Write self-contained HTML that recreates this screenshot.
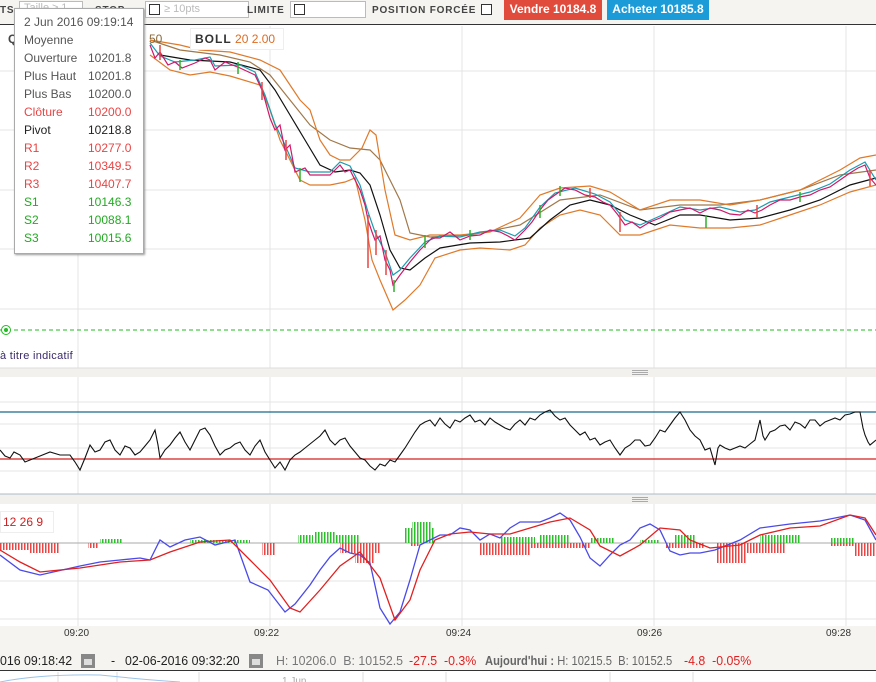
<!DOCTYPE html>
<html><head><meta charset="utf-8"><style>
*{margin:0;padding:0;box-sizing:border-box}
body{width:876px;height:682px;overflow:hidden;background:#fff;font-family:"Liberation Sans",sans-serif;position:relative}
.a{position:absolute;white-space:nowrap}
.tb{position:absolute;left:0;top:0;width:876px;height:25px;background:#f5f4f0;border-bottom:1px solid #333}
.lbl{font-size:10px;font-weight:bold;letter-spacing:.8px;color:#444;top:5px}
.inp{position:absolute;height:17px;top:1px;border:1px solid #bbb;background:#fff;font-size:11px;color:#bbb}
.cb{position:absolute;width:11px;height:11px;border:1px solid #333;background:#fff}
.tt{position:absolute;left:14px;top:8px;width:130px;height:246px;background:#fff;border:1px solid #aaa;box-shadow:1px 1px 2px #999;font-size:12px}
.tt div{position:absolute;left:9px;white-space:nowrap}
.tt span{position:absolute;left:64px}
.st{font-size:13px;top:653px;transform:scaleX(.95);transform-origin:0 0}
</style></head><body>
<div class="tb"></div>
<div class="a lbl" style="left:0">TS</div>
<div class="inp" style="left:19px;width:64px;padding-left:4px">Taille ≥ 1</div>
<div class="a lbl" style="left:95px">STOP</div>
<div class="inp" style="left:145px;width:104px;padding-left:18px;line-height:15px">≥ 10pts</div>
<div class="cb" style="left:149px;top:4px"></div>
<div class="a lbl" style="left:247px">LIMITE</div>
<div class="inp" style="left:290px;width:76px"></div>
<div class="cb" style="left:294px;top:4px"></div>
<div class="a lbl" style="left:372px">POSITION FORCÉE</div>
<div class="cb" style="left:481px;top:4px"></div>
<div class="a" style="left:504px;top:0;width:98px;height:20px;background:#e04b3c;color:#fff;font-size:12px;font-weight:bold;text-align:center;line-height:19px">Vendre 10184.8</div>
<div class="a" style="left:607px;top:0;width:102px;height:20px;background:#1b9bd8;color:#fff;font-size:12px;font-weight:bold;text-align:center;line-height:19px">Acheter 10185.8</div>

<svg class="a" style="left:0;top:26px" width="876" height="600" viewBox="0 26 876 600">
<defs>
<pattern id="pr" width="3" height="10" patternUnits="userSpaceOnUse"><rect width="1.5" height="10" fill="#e84545"/></pattern>
<pattern id="pg" width="3" height="10" patternUnits="userSpaceOnUse"><rect width="1.5" height="10" fill="#2cc02c"/></pattern>
</defs>
<g stroke="#e4e4e4" stroke-width="1">
<line x1="78" y1="26" x2="78" y2="626"/><line x1="270" y1="26" x2="270" y2="626"/><line x1="462" y1="26" x2="462" y2="626"/><line x1="654" y1="26" x2="654" y2="626"/><line x1="846" y1="26" x2="846" y2="626"/>
<line x1="0" y1="71" x2="876" y2="71"/><line x1="0" y1="130" x2="876" y2="130"/><line x1="0" y1="190" x2="876" y2="190"/><line x1="0" y1="249" x2="876" y2="249"/><line x1="0" y1="309" x2="876" y2="309"/>
<line x1="0" y1="402" x2="876" y2="402"/><line x1="0" y1="424" x2="876" y2="424"/><line x1="0" y1="448" x2="876" y2="448"/><line x1="0" y1="471" x2="876" y2="471"/>
<line x1="0" y1="581" x2="876" y2="581"/><line x1="0" y1="619" x2="876" y2="619"/>
</g>
<rect x="0" y="368" width="876" height="9" fill="#f2f1ee"/><line x1="0" y1="368" x2="876" y2="368" stroke="#ddd"/>
<rect x="0" y="494" width="876" height="10" fill="#f2f1ee"/><line x1="0" y1="494" x2="876" y2="494" stroke="#a9bccb"/>
<g stroke="#999" stroke-width=".8"><line x1="632" y1="370.5" x2="648" y2="370.5"/><line x1="632" y1="372.5" x2="648" y2="372.5"/><line x1="632" y1="374.5" x2="648" y2="374.5"/>
<line x1="632" y1="497.5" x2="648" y2="497.5"/><line x1="632" y1="499.5" x2="648" y2="499.5"/><line x1="632" y1="501.5" x2="648" y2="501.5"/></g>
<g fill="none" stroke-width="1.2">
<polyline stroke="#a0784a" points="150,40 180,50 220,55 250,62 270,75 290,100 310,125 330,140 350,148 370,150 380,160 390,180 400,200 410,233 430,237 470,235 520,225 560,200 600,195 640,210 680,205 720,205 760,200 800,190 840,175 876,170"/>
<polyline stroke="#e07a2a" points="150,40 180,45 200,50 230,52 260,60 280,70 290,85 300,100 310,110 320,140 330,155 340,160 350,160 362,148 370,130 376,135 385,190 395,235 410,240 430,235 460,235 490,232 520,218 540,195 560,188 590,186 610,192 640,210 670,200 700,200 730,205 760,200 800,190 840,170 860,158 876,155"/>
<polyline stroke="#e07a2a" points="150,55 170,70 190,75 210,72 230,76 260,85 270,110 280,140 290,160 300,180 310,185 330,185 345,182 355,178 365,220 372,260 380,280 393,310 405,300 420,285 435,258 460,250 480,248 510,250 525,245 540,228 560,215 580,210 600,215 620,235 640,235 670,225 700,228 730,228 760,225 790,215 820,205 850,192 876,185"/>
<polyline stroke="#111" points="160,55 190,60 230,62 260,70 275,90 290,115 305,140 320,165 335,172 350,170 360,173 370,185 380,215 390,250 400,268 410,270 425,258 440,248 470,243 500,242 530,238 550,220 570,205 590,200 610,205 630,215 655,225 680,215 700,215 730,220 760,218 790,210 820,200 850,185 876,178"/>
<polyline stroke="#1b9bb0" points="150,43 160,56 175,62 195,60 210,57 215,66 240,65 255,72 265,95 275,124 285,145 295,168 310,172 330,172 340,162 350,166 360,185 368,212 375,232 385,252 393,275 400,270 410,258 425,242 440,236 460,237 480,232 500,230 515,236 525,228 540,207 555,193 575,188 595,194 610,202 625,220 640,225 660,216 680,207 700,210 720,207 740,212 755,210 770,202 790,197 810,192 830,184 850,170 865,162 876,180"/>
<polyline stroke="#d0186a" points="150,45 155,58 160,52 168,65 175,62 182,68 195,63 205,58 210,60 215,70 225,62 240,68 255,75 262,90 265,100 270,118 275,130 280,125 285,150 290,145 295,172 305,168 310,175 330,175 340,165 345,172 350,170 360,190 365,205 368,220 372,232 375,240 380,236 385,260 390,270 393,285 400,275 410,262 420,250 425,245 432,238 440,238 450,232 460,240 470,236 480,235 490,230 500,232 508,236 515,240 525,230 532,222 540,210 548,200 555,195 565,188 575,190 585,195 595,197 603,202 610,205 618,215 625,225 632,222 640,228 650,222 660,218 670,212 680,210 690,208 700,213 710,208 720,210 730,214 740,215 748,210 755,213 762,210 770,205 780,200 790,200 800,197 810,195 820,190 830,187 840,180 850,173 858,168 865,165 870,178 876,185"/>
</g>
<g stroke-width="1.5"><g stroke="#e84545"><line x1="160" y1="45" x2="160" y2="60"/><line x1="262" y1="82" x2="262" y2="100"/><line x1="286" y1="140" x2="286" y2="160"/><line x1="368" y1="215" x2="368" y2="268"/><line x1="376" y1="230" x2="376" y2="255"/><line x1="386" y1="250" x2="386" y2="275"/><line x1="620" y1="212" x2="620" y2="232"/><line x1="757" y1="205" x2="757" y2="218"/><line x1="870" y1="170" x2="870" y2="186"/><line x1="590" y1="188" x2="590" y2="198"/></g>
<g stroke="#2cb02c"><line x1="180" y1="60" x2="180" y2="70"/><line x1="238" y1="62" x2="238" y2="74"/><line x1="300" y1="168" x2="300" y2="182"/><line x1="394" y1="280" x2="394" y2="292"/><line x1="425" y1="235" x2="425" y2="248"/><line x1="470" y1="230" x2="470" y2="240"/><line x1="540" y1="205" x2="540" y2="218"/><line x1="560" y1="186" x2="560" y2="196"/><line x1="706" y1="215" x2="706" y2="228"/><line x1="800" y1="192" x2="800" y2="202"/></g></g>
<line x1="0" y1="330" x2="876" y2="330" stroke="#22bb22" stroke-dasharray="4,3"/>
<circle cx="6" cy="330" r="4.5" fill="#fff" stroke="#22bb22"/><circle cx="6" cy="330" r="2" fill="#22bb22"/>
<line x1="0" y1="412" x2="876" y2="412" stroke="#1a6a8a" stroke-width="1.3"/>
<line x1="0" y1="459" x2="876" y2="459" stroke="#d42020" stroke-width="1.3"/>
<polyline fill="none" stroke="#111" stroke-width="1.1" points="0,450 5,456 10,458 14,452 20,455 25,462 30,460 40,456 50,452 60,455 70,455 75,462 80,470 85,458 90,445 95,452 100,450 105,442 110,440 115,450 120,455 125,446 130,448 135,455 140,452 145,446 150,440 155,430 158,445 160,458 165,450 170,445 175,438 180,432 185,442 190,450 195,440 200,430 205,428 210,435 215,446 220,455 225,450 230,448 235,444 240,442 245,450 250,455 255,446 260,440 265,452 270,460 275,468 280,462 285,470 290,460 295,455 300,452 305,448 310,444 315,440 320,436 325,430 330,440 335,445 340,440 345,438 350,446 355,452 360,458 365,460 370,466 375,470 380,464 385,466 390,460 395,462 400,455 405,448 410,440 415,432 420,425 425,422 430,420 435,426 440,418 445,424 450,428 455,420 460,422 465,418 470,415 475,422 480,420 485,425 490,418 495,422 500,425 505,428 510,430 515,424 520,420 525,425 530,418 535,420 540,415 545,412 550,410 555,416 560,420 565,418 570,425 575,430 580,435 585,432 590,440 595,438 600,445 605,442 610,440 615,448 620,455 625,448 630,445 635,440 640,440 645,446 650,445 655,438 660,430 665,432 670,425 675,418 680,412 685,420 690,430 695,436 700,440 705,450 710,448 715,465 718,448 720,445 725,448 730,450 740,446 745,448 750,444 755,440 758,428 760,420 763,436 765,440 770,432 775,430 780,426 785,425 790,430 795,422 800,424 805,428 810,420 815,420 820,426 825,422 830,420 835,418 840,420 845,415 850,414 855,412 860,412 863,428 865,435 868,442 870,445 876,440"/>
<line x1="0" y1="543" x2="876" y2="543" stroke="#aaa"/>
<g fill="url(#pr)"><rect x="0" y="543" width="30" height="7"/><rect x="30" y="543" width="30" height="10"/><rect x="88" y="543" width="10" height="5"/><rect x="262" y="543" width="14" height="12"/><rect x="340" y="543" width="40" height="10"/><rect x="355" y="543" width="20" height="20"/><rect x="410" y="543" width="10" height="3"/><rect x="480" y="543" width="50" height="12"/><rect x="530" y="543" width="60" height="5"/><rect x="665" y="543" width="40" height="5"/><rect x="717" y="543" width="30" height="20"/><rect x="746" y="543" width="40" height="10"/><rect x="830" y="543" width="30" height="3"/><rect x="856" y="543" width="20" height="10"/></g>
<g fill="url(#pg)"><rect x="100" y="539" width="22" height="4"/><rect x="190" y="540" width="60" height="3"/><rect x="298" y="535" width="15" height="8"/><rect x="315" y="532" width="20" height="11"/><rect x="330" y="535" width="30" height="8"/><rect x="500" y="537" width="35" height="6"/><rect x="540" y="535" width="30" height="8"/><rect x="590" y="538" width="25" height="5"/><rect x="640" y="540" width="20" height="3"/><rect x="675" y="535" width="20" height="8"/><rect x="760" y="535" width="40" height="8"/><rect x="830" y="538" width="25" height="5"/></g>
<rect x="405" y="528" width="30" height="15" fill="url(#pg)"/><rect x="412" y="522" width="20" height="21" fill="url(#pg)"/>
<rect x="855" y="543" width="20" height="13" fill="url(#pr)"/>
<polyline fill="none" stroke="#4a4ae8" stroke-width="1.3" points="0,555 20,570 40,575 80,566 100,562 120,560 140,558 150,560 160,540 170,547 185,540 200,537 215,545 235,540 250,582 268,590 285,612 295,604 310,585 320,570 330,557 340,548 350,553 360,555 370,563 380,608 390,624 400,612 410,580 420,545 440,535 450,535 460,528 470,530 480,540 490,534 500,538 510,528 520,522 540,522 550,518 560,513 570,520 580,537 590,558 600,566 610,555 620,545 630,540 640,528 650,524 660,530 670,551 680,555 690,553 700,553 715,550 740,540 760,528 790,524 820,521 850,515 865,520 876,540"/>
<polyline fill="none" stroke="#e02020" stroke-width="1.3" points="0,550 20,562 40,572 80,568 100,565 120,562 150,560 170,552 200,542 230,540 250,560 270,580 290,608 300,612 320,590 340,566 360,552 380,578 395,620 410,600 420,570 435,540 450,534 470,532 490,534 510,534 530,528 550,522 570,518 590,530 600,546 620,556 640,545 660,528 680,530 690,540 710,548 740,545 760,535 790,528 820,526 850,515 865,518 876,535"/>
</svg>

<div class="a" style="left:8px;top:32px;font-size:12px;font-weight:bold;color:#444">Q</div>
<div class="a" style="left:149px;top:32px;font-size:12px;color:#8a6a3a">50</div>
<div class="a" style="left:190px;top:28px;width:94px;height:22px;background:#fff;border:1px solid #eee;font-size:12px;line-height:20px;padding-left:4px"><b style="color:#333;letter-spacing:1px">BOLL</b> <span style="color:#e06a20">20 2.00</span></div>
<div class="a" style="left:0;top:350px;font-size:11px;color:#3a2a6a;letter-spacing:.3px">à titre indicatif</div>
<div class="a" style="left:0;top:511px;width:54px;height:22px;background:#fff;border:1px solid #eee;font-size:12px;color:#d02020;line-height:20px;padding-left:2px">12 26 9</div>

<div class="tt">
<div style="top:6px;color:#555">2 Jun 2016 09:19:14</div>
<div style="top:24px;color:#555">Moyenne</div>
<div style="top:42px;color:#555">Ouverture<span>10201.8</span></div>
<div style="top:60px;color:#555">Plus Haut<span>10201.8</span></div>
<div style="top:78px;color:#555">Plus Bas<span>10200.0</span></div>
<div style="top:96px;color:#e84545">Clôture<span>10200.0</span></div>
<div style="top:114px;color:#222">Pivot<span>10218.8</span></div>
<div style="top:132px;color:#e84545">R1<span>10277.0</span></div>
<div style="top:150px;color:#e84545">R2<span>10349.5</span></div>
<div style="top:168px;color:#e84545">R3<span>10407.7</span></div>
<div style="top:186px;color:#22aa22">S1<span>10146.3</span></div>
<div style="top:204px;color:#22aa22">S2<span>10088.1</span></div>
<div style="top:222px;color:#22aa22">S3<span>10015.6</span></div>
</div>

<div class="a" style="left:0;top:626px;width:876px;height:45px;background:#f5f4f0;border-bottom:1px solid #333"></div>
<div class="a" style="top:628px;left:64px;font-size:10px;color:#333">09:20</div>
<div class="a" style="top:628px;left:254px;font-size:10px;color:#333">09:22</div>
<div class="a" style="top:628px;left:446px;font-size:10px;color:#333">09:24</div>
<div class="a" style="top:628px;left:637px;font-size:10px;color:#333">09:26</div>
<div class="a" style="top:628px;left:826px;font-size:10px;color:#333">09:28</div>
<div class="a st" style="left:0;color:#222">016 09:18:42</div>
<div class="a" style="left:81px;top:654px;width:14px;height:14px;background:#888;border:3px solid #888;"><div style="width:8px;height:6px;background:#ddd;margin-top:2px"></div></div>
<div class="a st" style="left:111px;color:#222">-</div>
<div class="a st" style="left:125px;color:#222">02-06-2016 09:32:20</div>
<div class="a" style="left:249px;top:654px;width:14px;height:14px;background:#888;border:3px solid #888;"><div style="width:8px;height:6px;background:#ddd;margin-top:2px"></div></div>
<div class="a st" style="left:276px;color:#777">H: 10206.0 &nbsp;B: 10152.5</div>
<div class="a st" style="left:409px;color:#e02020">-27.5 &nbsp;-0.3%</div>
<div class="a st" style="left:485px;color:#666;transform:scaleX(.86)"><b>Aujourd'hui :</b> H: 10215.5 &nbsp;B: 10152.5</div>
<div class="a st" style="left:684px;color:#e02020">-4.8 &nbsp;-0.05%</div>
<svg class="a" style="left:0;top:672px" width="876" height="10"><g stroke="#ddd"><line x1="58" y1="0" x2="58" y2="10"/><line x1="117" y1="0" x2="117" y2="10"/><line x1="199" y1="0" x2="199" y2="10"/><line x1="363" y1="0" x2="363" y2="10"/><line x1="446" y1="0" x2="446" y2="10"/><line x1="610" y1="0" x2="610" y2="10"/><line x1="693" y1="0" x2="693" y2="10"/></g><path d="M0,10 Q40,2 100,3 L130,6 Q150,8 180,10" fill="none" stroke="#9cc4e8"/><text x="282" y="12" font-size="10" fill="#aaa" font-family="Liberation Sans">1 Jun</text></svg>
</body></html>
